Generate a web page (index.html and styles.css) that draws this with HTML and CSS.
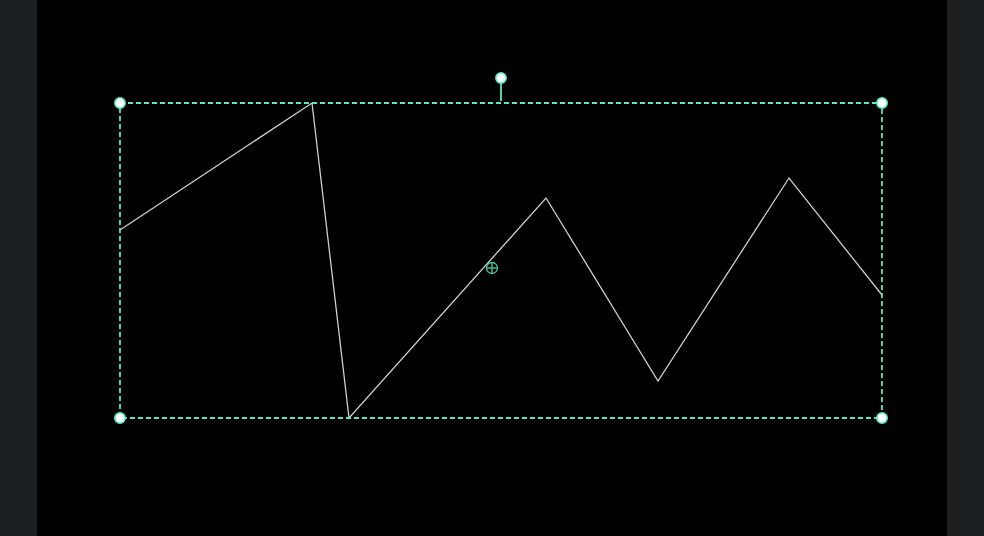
FILE: index.html
```html
<!DOCTYPE html>
<html>
<head>
<meta charset="utf-8">
<link rel="stylesheet" href="styles.css">
</head>
<body>
<div class="app">
  <div class="side"></div>
  <div class="canvas">
    <svg class="stage" width="910" height="536" viewBox="37 0 910 536" xmlns="http://www.w3.org/2000/svg">
      <polyline points="120,230 312,103 349,418 546,198 658,381 789,178 882,295" fill="none" stroke="#cfcfcf" stroke-width="1.3"/>
      <rect x="120" y="103" width="762" height="315" fill="none" stroke="#5ae6c0" stroke-width="1.8" stroke-dasharray="5 3"/>
      <line x1="501" y1="83" x2="501" y2="101" stroke="#5ae6c0" stroke-width="1.8"/>
      <circle cx="492" cy="268" r="5.5" fill="none" stroke="#45cca6" stroke-width="1.3"/>
      <line x1="486.5" y1="268" x2="497.5" y2="268" stroke="#45cca6" stroke-width="1.3"/>
      <line x1="492" y1="262.5" x2="492" y2="273.5" stroke="#45cca6" stroke-width="1.3"/>
      <g fill="#ffffff" stroke="#5ae6c0" stroke-width="1.6">
        <circle cx="120" cy="103" r="5.2"/>
        <circle cx="882" cy="103" r="5.2"/>
        <circle cx="120" cy="418" r="5.2"/>
        <circle cx="882" cy="418" r="5.2"/>
        <circle cx="501" cy="78" r="5.2"/>
      </g>
    </svg>
  </div>
  <div class="side"></div>
</div>
</body>
</html>
```
FILE: styles.css
```css
html, body {
  margin: 0;
  padding: 0;
  background: #000;
  font-family: "Liberation Sans", Arial, sans-serif;
}
.app {
  display: flex;
  width: 984px;
  height: 536px;
  overflow: hidden;
}
.side {
  width: 37px;
  flex: 0 0 37px;
  background: #1d2023;
}
.canvas {
  flex: 1 1 auto;
  background: #000;
}
.stage {
  display: block;
}
```
